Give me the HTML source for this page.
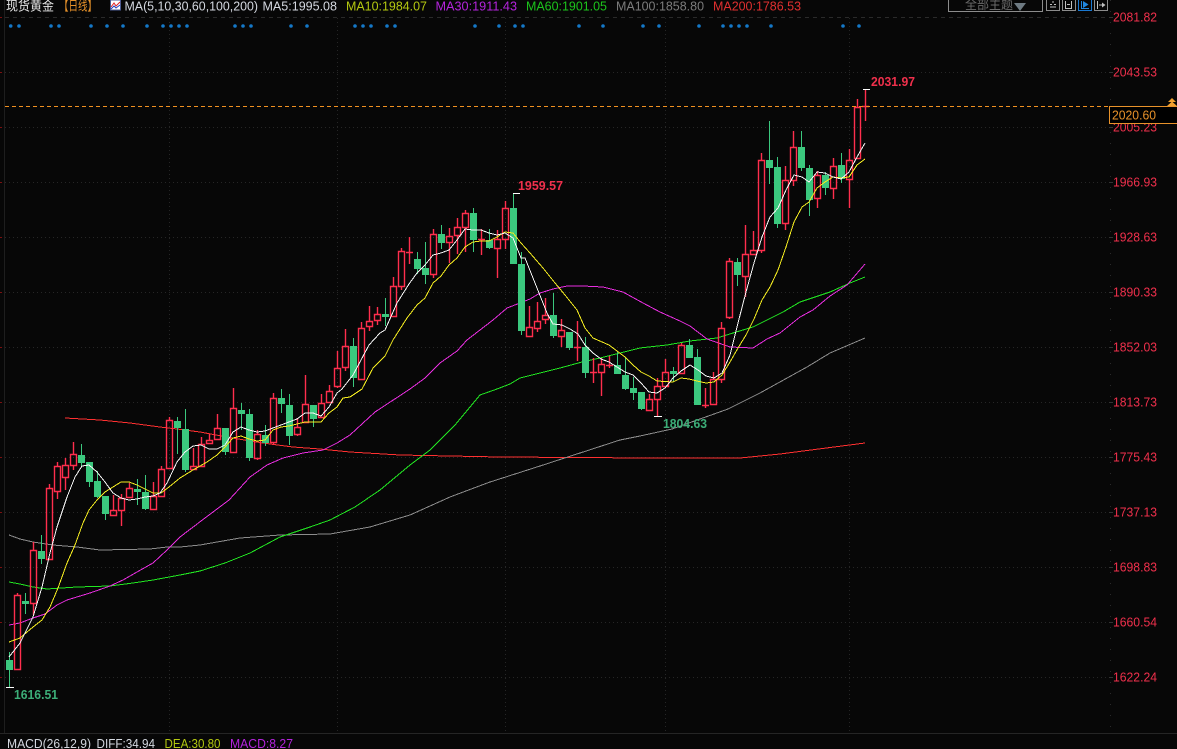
<!DOCTYPE html>
<html><head><meta charset="utf-8"><style>
html,body{margin:0;padding:0;background:#070707;width:1177px;height:749px;overflow:hidden}
svg{display:block;position:absolute;left:0;top:0}
text{font-family:"Liberation Sans","Noto Sans CJK SC",sans-serif;font-size:13px}
</style></head><body>
<svg width="1177" height="749" viewBox="0 0 1177 749" xmlns="http://www.w3.org/2000/svg">
<rect width="1177" height="749" fill="#070707"/>
<g shape-rendering="crispEdges">
<path d="M5 17.5H1110" stroke="#2a2a2a" stroke-dasharray="4 4" fill="none"/>
<path d="M5 72.5H1110M5 127.5H1110M5 182.5H1110M5 237.5H1110M5 292.5H1110M5 347.5H1110M5 402.5H1110M5 457.5H1110M5 512.5H1110M5 567.5H1110M5 622.5H1110M5 677.5H1110" stroke="#262626" stroke-dasharray="1 3" fill="none"/>
<path d="M169.5 18V733M337.5 18V733M505.5 18V733M665.5 18V733M849.5 18V733" stroke="#262626" stroke-dasharray="1 3" fill="none"/>
<path d="M4.5 0V733" stroke="#1e1e1e" fill="none"/>
<path d="M0 733.5H1177" stroke="#252525" fill="none"/>
<path d="M0 17.5H2M0 72.5H2M0 127.5H2M0 182.5H2M0 237.5H2M0 292.5H2M0 347.5H2M0 402.5H2M0 457.5H2M0 512.5H2M0 567.5H2M0 622.5H2M0 677.5H2" stroke="#7a1010" fill="none"/>
<path d="M1110.5 0V733" stroke="#2a2a2a" stroke-dasharray="1 10" fill="none"/>
<path d="M1109 17.5H1113M1109 72.5H1113M1109 127.5H1113M1109 182.5H1113M1109 237.5H1113M1109 292.5H1113M1109 347.5H1113M1109 402.5H1113M1109 457.5H1113M1109 512.5H1113M1109 567.5H1113M1109 622.5H1113M1109 677.5H1113" stroke="#333" fill="none"/>
</g>
<g fill="#1478c8">
<circle cx="10.7" cy="26" r="1.8"/><circle cx="19" cy="26" r="1.8"/><circle cx="51" cy="26" r="1.8"/><circle cx="59" cy="26" r="1.8"/><circle cx="91" cy="26" r="1.8"/><circle cx="107" cy="26" r="1.8"/><circle cx="123" cy="26" r="1.8"/><circle cx="147" cy="26" r="1.8"/><circle cx="163" cy="26" r="1.8"/><circle cx="171" cy="26" r="1.8"/><circle cx="179" cy="26" r="1.8"/><circle cx="187" cy="26" r="1.8"/><circle cx="235" cy="26" r="1.8"/><circle cx="243" cy="26" r="1.8"/><circle cx="251" cy="26" r="1.8"/><circle cx="291" cy="26" r="1.8"/><circle cx="307" cy="26" r="1.8"/><circle cx="355" cy="26" r="1.8"/><circle cx="363" cy="26" r="1.8"/><circle cx="371" cy="26" r="1.8"/><circle cx="387" cy="26" r="1.8"/><circle cx="395" cy="26" r="1.8"/><circle cx="475" cy="26" r="1.8"/><circle cx="499" cy="26" r="1.8"/><circle cx="515" cy="26" r="1.8"/><circle cx="523" cy="26" r="1.8"/><circle cx="579" cy="26" r="1.8"/><circle cx="603" cy="26" r="1.8"/><circle cx="643" cy="26" r="1.8"/><circle cx="659" cy="26" r="1.8"/><circle cx="699" cy="26" r="1.8"/><circle cx="723" cy="26" r="1.8"/><circle cx="731" cy="26" r="1.8"/><circle cx="739" cy="26" r="1.8"/><circle cx="747" cy="26" r="1.8"/><circle cx="771" cy="26" r="1.8"/><circle cx="843" cy="26" r="1.8"/><circle cx="859" cy="26" r="1.8"/>
</g>
<g shape-rendering="crispEdges" fill="none" stroke-width="1">
<path d="M65 418 100 420 130 423 160 427 177 429 200 432 227 437 250 441 270 444 293 447 320 449 350 452 400 455 500 457 650 458 740 458 780 454 865 443" stroke="#ff3030"/>
<path d="M9 535 20 539 33 542 53 545 77 547 100 550 150 549 167 547 180 547 200 545 240 538 280 535 330 534 370 527 410 515 450 497 490 482 540 466 580 453 620 440 640 436 672 429 728 409 760 393 807 367 830 353 865 338" stroke="#8c8c8c"/>
<path d="M9 582 20 584 33 587 47 589 77 587 110 586 133 583 153 580 180 575 200 571 225 563 250 553 280 537 310 527 330 520 355 507 380 490 410 465 430 450 455 425 480 395 497 389 510 384 520 378 540 373 560 368 582 362 600 358 620 353 640 348 667 345 690 341 717 338 733 333 753 327 783 312 800 302 830 292 850 283 865 277" stroke="#22e622"/>
<path d="M9 625 20 623 33 618 45 614 57 605 67 600 90 593 110 586 123 580 137 572 153 563 167 550 180 537 205 518 229 500 250 477 267 465 283 458 303 453 323 450 337 443 350 435 375 412 410 389 425 378 440 363 457 351 467 340 493 320 507 308 520 303 530 299 540 293 553 289 567 286 583 286 603 287 623 292 643 303 660 312 680 321 690 326 707 339 730 347 753 348 767 339 780 333 800 317 813 310 830 296 847 285 865 264" stroke="#e82ee0"/>
</g>
<path shape-rendering="crispEdges" fill="#3bc87e" stroke="#3bc87e" d="M9.5 652V687M6.5 660.5H12.5V669.5H6.5ZM25.5 593V614M22.5 601.5H28.5V603.5H22.5ZM41.5 535V564M38.5 551.5H44.5V558.5H38.5ZM81.5 444V466M78.5 455.5H84.5V462.5H78.5ZM89.5 462V487M86.5 462.5H92.5V481.5H86.5ZM97.5 471V498M94.5 481.5H100.5V496.5H94.5ZM105.5 496V520M102.5 496.5H108.5V513.5H102.5ZM137.5 479V505M134.5 489.5H140.5V491.5H134.5ZM145.5 475V510M142.5 492.5H148.5V508.5H142.5ZM177.5 417V454M174.5 421.5H180.5V427.5H174.5ZM185.5 409V472M182.5 429.5H188.5V469.5H182.5ZM225.5 428V455M222.5 428.5H228.5V451.5H222.5ZM241.5 403V430M238.5 410.5H244.5V413.5H238.5ZM249.5 409V461M246.5 414.5H252.5V457.5H246.5ZM265.5 425V446M262.5 435.5H268.5V442.5H262.5ZM281.5 389V413M278.5 398.5H284.5V403.5H278.5ZM289.5 394V445M286.5 405.5H292.5V435.5H286.5ZM313.5 405V427M310.5 405.5H316.5V418.5H310.5ZM353.5 338V387M350.5 346.5H356.5V377.5H350.5ZM385.5 298V326M382.5 314.5H388.5V316.5H382.5ZM417.5 252V274M414.5 259.5H420.5V268.5H414.5ZM425.5 242V284M422.5 268.5H428.5V274.5H422.5ZM441.5 225V249M438.5 234.5H444.5V242.5H438.5ZM473.5 208V252M470.5 213.5H476.5V239.5H470.5ZM489.5 229V249M486.5 240.5H492.5V247.5H486.5ZM513.5 193V263M510.5 208.5H516.5V263.5H510.5ZM521.5 252V335M518.5 264.5H524.5V330.5H518.5ZM553.5 293V338M550.5 315.5H556.5V335.5H550.5ZM569.5 332V350M566.5 332.5H572.5V347.5H566.5ZM585.5 337V378M582.5 347.5H588.5V372.5H582.5ZM617.5 352V373M614.5 365.5H620.5V373.5H614.5ZM625.5 358V390M622.5 375.5H628.5V388.5H622.5ZM633.5 377V400M630.5 388.5H636.5V392.5H630.5ZM641.5 392V410M638.5 392.5H644.5V408.5H638.5ZM673.5 367V382M670.5 371.5H676.5V373.5H670.5ZM689.5 339V358M686.5 345.5H692.5V357.5H686.5ZM697.5 349V405M694.5 357.5H700.5V404.5H694.5ZM737.5 258V286M734.5 262.5H740.5V274.5H734.5ZM769.5 121V184M766.5 160.5H772.5V167.5H766.5ZM777.5 157V228M774.5 167.5H780.5V223.5H774.5ZM801.5 131V171M798.5 147.5H804.5V167.5H798.5ZM809.5 165V216M806.5 168.5H812.5V199.5H806.5ZM825.5 172V195M822.5 175.5H828.5V187.5H822.5ZM841.5 153V183M838.5 165.5H844.5V178.5H838.5Z"/>
<path fill="none" stroke="#ff2e4d" stroke-width="1.4" d="M17.5 593V595M14.5 595.5H20.5V669.5H14.5ZM33.5 542V550M33.5 603V615M30.5 550.5H36.5V603.5H30.5ZM49.5 484V488M46.5 488.5H52.5V559.5H46.5ZM57.5 462V466M57.5 491V499M54.5 466.5H60.5V491.5H54.5ZM65.5 458V465M65.5 477V490M62.5 465.5H68.5V477.5H62.5ZM73.5 442V454M73.5 465V470M70.5 454.5H76.5V465.5H70.5ZM113.5 495V510M110.5 510.5H116.5V515.5H110.5ZM121.5 494V498M121.5 510V526M118.5 498.5H124.5V510.5H118.5ZM129.5 483V488M126.5 488.5H132.5V497.5H126.5ZM153.5 482V496M150.5 496.5H156.5V509.5H150.5ZM161.5 466V469M158.5 469.5H164.5V496.5H158.5ZM169.5 417V420M166.5 420.5H172.5V468.5H166.5ZM193.5 448V466M190.5 466.5H196.5V469.5H190.5ZM201.5 437V444M198.5 444.5H204.5V466.5H198.5ZM209.5 434V440M206.5 440.5H212.5V443.5H206.5ZM217.5 414V428M214.5 428.5H220.5V439.5H214.5ZM233.5 388V408M230.5 408.5H236.5V452.5H230.5ZM257.5 430V434M257.5 458V460M254.5 434.5H260.5V458.5H254.5ZM273.5 393V398M273.5 442V445M270.5 398.5H276.5V442.5H270.5ZM297.5 418V427M297.5 434V436M294.5 427.5H300.5V434.5H294.5ZM305.5 375V404M302.5 404.5H308.5V422.5H302.5ZM321.5 394V403M318.5 403.5H324.5V417.5H318.5ZM329.5 385V391M326.5 391.5H332.5V402.5H326.5ZM337.5 351V368M337.5 386V388M334.5 368.5H340.5V386.5H334.5ZM345.5 329V346M345.5 367V371M342.5 346.5H348.5V367.5H342.5ZM361.5 322V328M358.5 328.5H364.5V379.5H358.5ZM369.5 306V321M369.5 326V331M366.5 321.5H372.5V326.5H366.5ZM377.5 307V314M377.5 320V325M374.5 314.5H380.5V320.5H374.5ZM393.5 277V286M390.5 286.5H396.5V316.5H390.5ZM401.5 248V251M401.5 286V290M398.5 251.5H404.5V286.5H398.5ZM409.5 237V264M406 252.5H413ZM433.5 229V234M433.5 274V278M430.5 234.5H436.5V274.5H430.5ZM449.5 228V236M449.5 242V263M446.5 236.5H452.5V242.5H446.5ZM457.5 218V227M457.5 235V254M454.5 227.5H460.5V235.5H454.5ZM465.5 210V213M465.5 227V252M462.5 213.5H468.5V227.5H462.5ZM481.5 229V255M478 239.5H485ZM497.5 230V239M497.5 248V278M494.5 239.5H500.5V248.5H494.5ZM505.5 201V208M505.5 239V249M502.5 208.5H508.5V239.5H502.5ZM529.5 306V327M526.5 327.5H532.5V336.5H526.5ZM537.5 302V321M537.5 328V332M534.5 321.5H540.5V328.5H534.5ZM545.5 298V315M545.5 319V324M542.5 315.5H548.5V319.5H542.5ZM561.5 319V330M561.5 336V347M558.5 330.5H564.5V336.5H558.5ZM577.5 321V361M574 347.5H581ZM593.5 358V383M590 372.5H597ZM601.5 358V364M601.5 372V396M598.5 364.5H604.5V372.5H598.5ZM609.5 356V368M606 365.5H613ZM649.5 394V399M646.5 399.5H652.5V410.5H646.5ZM657.5 378V386M657.5 399V416M654.5 386.5H660.5V399.5H654.5ZM665.5 359V372M662.5 372.5H668.5V386.5H662.5ZM681.5 343V345M678.5 345.5H684.5V373.5H678.5ZM705.5 388V408M702 405.5H709ZM713.5 372V379M713.5 404V405M710.5 379.5H716.5V404.5H710.5ZM721.5 322V328M721.5 379V383M718.5 328.5H724.5V379.5H718.5ZM729.5 258V261M729.5 317V319M726.5 261.5H732.5V317.5H726.5ZM745.5 225V254M745.5 276V297M742.5 254.5H748.5V276.5H742.5ZM753.5 231V250M750.5 250.5H756.5V254.5H750.5ZM761.5 153V160M761.5 250V253M758.5 160.5H764.5V250.5H758.5ZM785.5 166V180M785.5 223V230M782.5 180.5H788.5V223.5H782.5ZM793.5 131V147M793.5 180V186M790.5 147.5H796.5V180.5H790.5ZM817.5 171V175M817.5 198V208M814.5 175.5H820.5V198.5H814.5ZM833.5 158V166M833.5 188V199M830.5 166.5H836.5V188.5H830.5ZM849.5 149V160M849.5 179V208M846.5 160.5H852.5V179.5H846.5ZM857.5 99V107M854.5 107.5H860.5V158.5H854.5ZM865.5 89V121M862 106.5H869Z"/>
<path shape-rendering="crispEdges" d="M6 687.5H14M513 193.5H520M654 416.5H662M863 89.5H870" stroke="#fff" fill="none"/>
<g shape-rendering="crispEdges" fill="none">
<path d="M9 642 20 638 33 627 42 620 50 607 58 588 67 563 75 545 83 523 89 510 97 500 105 492 113 487 121 482 129 482 137 485 145 489 153 493 161 493 169 487 180 478 193 470 207 462 217 455 225 447 233 438 241 436 249 439 257 441 265 440 273 430 281 427 289 426 297 424 305 422 313 422 321 422 329 413 337 407 343 398 350 397 362 389 373 368 385 356 393 340 407 318 417 305 425 298 433 283 441 276 449 265 457 258 465 247 473 242 481 241 489 241 497 237 505 232 513 233 521 243 530 253 543 268 555 283 565 295 577 310 585 328 593 338 609 345 617 351 625 357 633 365 641 372 649 376 657 381 673 382 681 378 689 379 697 381 706 383 714 382 722 375 730 362 738 348 746 335 754 319 762 300 770 287 778 270 786 247 794 222 802 207 809 202 817 188 825 182 833 177 841 178 849 177 857 165 865 159" stroke="#f4ec20"/>
<path d="M9 657 20 643 33 617 42 587 50 553 57 527 67 497 75 477 82 466 89 465 97 472 105 482 113 493 121 498 129 500 137 499 145 497 153 496 160 493 167 483 177 462 185 452 193 446 201 445 209 449 217 449 225 445 233 432 241 427 249 430 257 432 265 431 273 428 281 425 289 422 297 419 305 413 313 413 321 416 329 407 337 393 342 389 353 375 369 345 380 333 385 330 397 303 409 284 417 273 425 265 433 255 441 253 449 250 457 240 465 229 473 230 481 230 489 233 497 235 505 233 513 238 521 258 525 258 537 288 547 313 553 324 562 325 570 329 578 334 585 345 593 353 601 359 609 362 617 367 625 372 633 375 641 383 649 392 657 393 665 388 673 378 681 371 690 365 698 370 706 376 714 378 722 373 730 355 738 323 746 292 754 263 762 237 770 217 778 208 786 190 794 175 802 177 809 182 817 172 825 173 833 177 841 179 849 172 857 157 865 143" stroke="#f6f6f6"/>
</g>
<path d="M5 106.5H1109" stroke="#f09020" stroke-dasharray="4 3" fill="none" shape-rendering="crispEdges"/>
<g font-weight="bold">
<text x="871" y="86" fill="#f0304c" textLength="44" lengthAdjust="spacingAndGlyphs">2031.97</text>
<text x="518" y="190" fill="#f0304c" textLength="45" lengthAdjust="spacingAndGlyphs">1959.57</text>
<text x="663" y="428" fill="#3cae78" textLength="44" lengthAdjust="spacingAndGlyphs">1804.63</text>
<text x="14" y="699" fill="#3cae78" textLength="44" lengthAdjust="spacingAndGlyphs">1616.51</text>
</g>
<g fill="#f0304c">
<text x="1113" y="21.5" textLength="44" lengthAdjust="spacingAndGlyphs">2081.82</text>
<text x="1113" y="76.5" textLength="44" lengthAdjust="spacingAndGlyphs">2043.53</text>
<text x="1113" y="131.5" textLength="44" lengthAdjust="spacingAndGlyphs">2005.23</text>
<text x="1113" y="186.5" textLength="44" lengthAdjust="spacingAndGlyphs">1966.93</text>
<text x="1113" y="241.5" textLength="44" lengthAdjust="spacingAndGlyphs">1928.63</text>
<text x="1113" y="296.5" textLength="44" lengthAdjust="spacingAndGlyphs">1890.33</text>
<text x="1113" y="351.5" textLength="44" lengthAdjust="spacingAndGlyphs">1852.03</text>
<text x="1113" y="406.5" textLength="44" lengthAdjust="spacingAndGlyphs">1813.73</text>
<text x="1113" y="461.5" textLength="44" lengthAdjust="spacingAndGlyphs">1775.43</text>
<text x="1113" y="516.5" textLength="44" lengthAdjust="spacingAndGlyphs">1737.13</text>
<text x="1113" y="571.5" textLength="44" lengthAdjust="spacingAndGlyphs">1698.83</text>
<text x="1113" y="626.5" textLength="44" lengthAdjust="spacingAndGlyphs">1660.54</text>
<text x="1113" y="681.5" textLength="44" lengthAdjust="spacingAndGlyphs">1622.24</text>
</g>
<rect x="1109.5" y="106.5" width="68" height="17" fill="#000" stroke="#e8922a" shape-rendering="crispEdges"/>
<text x="1112" y="119.5" fill="#e8922a" textLength="44" lengthAdjust="spacingAndGlyphs">2020.60</text>
<path d="M1172 98 1176 102H1168ZM1172 101.5 1177 106H1167Z" fill="#f0a030"/>
<text x="6" y="10.5" fill="#e8e8e8" textLength="48" lengthAdjust="spacingAndGlyphs">现货黄金</text>
<text x="59" y="10.5" fill="#e8922a" textLength="38" lengthAdjust="spacingAndGlyphs">【日线】</text>
<rect x="110.5" y="0" width="10" height="10" fill="#fff" stroke="#4a5a90"/>
<path d="M111 7 114 3 116 6 120 2" stroke="#e02020" fill="none"/>
<path d="M111 9 114 6 116 8 120 5" stroke="#2040c0" fill="none"/>
<text x="124.5" y="10.5" fill="#d4d8e0" textLength="133.5" lengthAdjust="spacingAndGlyphs">MA(5,10,30,60,100,200)</text>
<text x="262.5" y="10.5" fill="#d4d8e0" textLength="74.5" lengthAdjust="spacingAndGlyphs">MA5:1995.08</text>
<text x="346" y="10.5" fill="#b4c810" textLength="81" lengthAdjust="spacingAndGlyphs">MA10:1984.07</text>
<text x="435.5" y="10.5" fill="#b424dc" textLength="81.5" lengthAdjust="spacingAndGlyphs">MA30:1911.43</text>
<text x="526" y="10.5" fill="#1cc41c" textLength="81" lengthAdjust="spacingAndGlyphs">MA60:1901.05</text>
<text x="616" y="10.5" fill="#7c7c7c" textLength="88" lengthAdjust="spacingAndGlyphs">MA100:1858.80</text>
<text x="713" y="10.5" fill="#e03030" textLength="88" lengthAdjust="spacingAndGlyphs">MA200:1786.53</text>
<text x="7" y="748" fill="#d4d8e0" textLength="84" lengthAdjust="spacingAndGlyphs">MACD(26,12,9)</text>
<text x="96.5" y="748" fill="#d4d8e0" textLength="58.5" lengthAdjust="spacingAndGlyphs">DIFF:34.94</text>
<text x="164.5" y="748" fill="#b4c810" textLength="56" lengthAdjust="spacingAndGlyphs">DEA:30.80</text>
<text x="230" y="748" fill="#b424dc" textLength="63" lengthAdjust="spacingAndGlyphs">MACD:8.27</text>
<g shape-rendering="crispEdges" fill="none" stroke="#8c8c8c">
<path d="M948.5 0V11.5H1042.5V0"/>
<path d="M1046.5 0V10.5H1059.5V0M1062.5 0V10.5H1075.5V0M1094.5 0V10.5H1107.5V0"/>
<path d="M1078.5 0V10.5H1091.5V0" stroke="#1a78d0"/>
<path d="M1050 4.5H1052M1054 4.5H1056M1053 1V3M1053 6V8M1050 7H1052M1054 7H1056" stroke="#c0c0c0"/>
<path d="M1065.5 1V9M1065.5 8.5H1072M1071.5 1V9M1067 4.5H1070" stroke="#c0c0c0"/>
<path d="M1081.5 1V9M1081.5 8.5H1089" stroke="#2088e0"/>
<path d="M1097.5 1V9M1099 5H1105" stroke="#c0c0c0"/>
</g>
<path d="M1083 1 1088.5 4.5 1083 8Z" fill="#2088e0"/>
<path d="M1102 2.5 1105.5 5 1102 7.5Z" fill="#c0c0c0"/>
<text x="965" y="9" fill="#6a6a6a" textLength="48" lengthAdjust="spacingAndGlyphs">全部主题</text>
<path d="M1014 3H1026L1020 11Z" fill="#6e7a82"/>
</svg>
</body></html>
